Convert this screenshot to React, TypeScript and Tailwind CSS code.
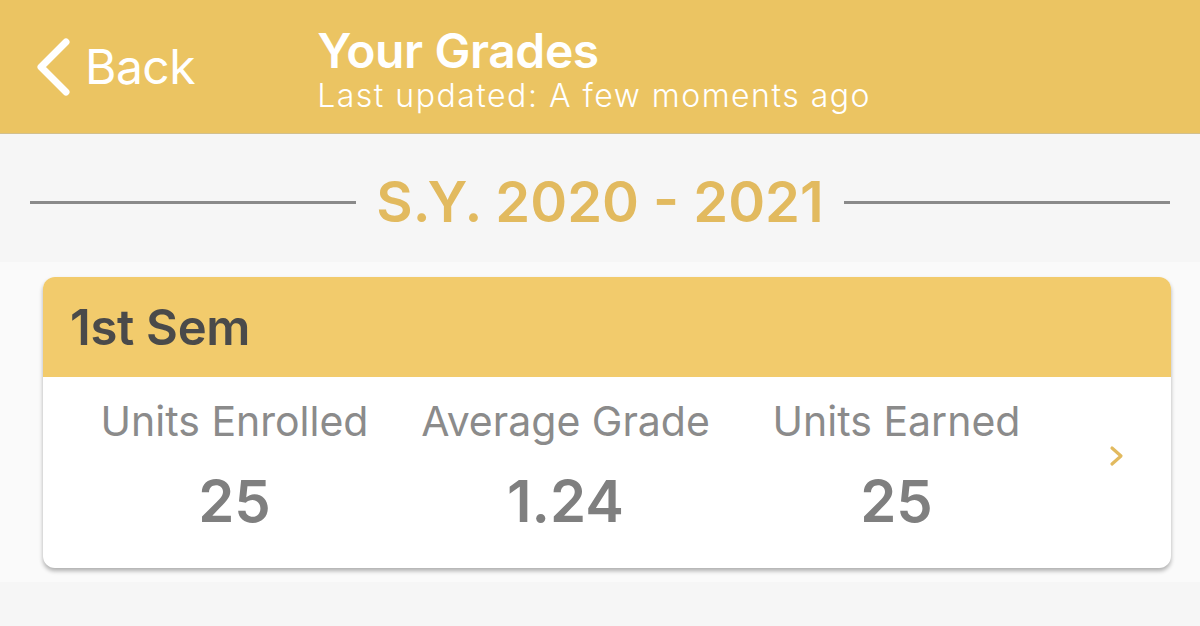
import React from 'react';

type Stat = { label: string; value: string };

const stats: Stat[] = [
    { label: 'Units Enrolled', value: '25' },
    { label: 'Average Grade', value: '1.24' },
    { label: 'Units Earned', value: '25' },
];

const BackChevron = () => (
    <svg width="36" height="58" viewBox="0 0 36 58" fill="none">
        <path d="M31 4L6 29l25 25" stroke="white" strokeWidth="7" strokeLinecap="round" strokeLinejoin="round" />
    </svg>
);

const App: React.FC = () => {
    return (
        <div className="flex h-[626px] w-[1200px] flex-col overflow-hidden bg-[#f6f6f6] font-['Inter',sans-serif]">
            {/* nav bar */}
            <header className="flex h-[134px] shrink-0 items-center border-b border-[#d2c08e] bg-[#ebc462]">
                <button className="ml-[35px] flex items-center gap-[14px] text-white">
                    <BackChevron />
                    <span className="text-[48px] leading-none tracking-[-0.5px]">Back</span>
                </button>
                <div className="ml-[122px] flex flex-col pt-[6px] text-white">
                    <h1 className="text-[48px] font-semibold leading-[52px] tracking-[-0.4px]">Your Grades</h1>
                    <p className="text-[32px] font-light leading-[38px] tracking-[1.5px]">Last updated: A few moments ago</p>
                </div>
            </header>

            {/* school year divider */}
            <div className="flex h-[128px] shrink-0 items-center gap-[20px] px-[30px] pt-[8px]">
                <div className="h-[3px] flex-1 bg-[#8a8a8a]" />
                <h2 className="text-[56px] font-semibold leading-none text-[#e2ba5f]">S.Y. 2020 - 2021</h2>
                <div className="h-[3px] flex-1 bg-[#8a8a8a]" />
            </div>

            {/* semester list */}
            <div className="bg-[#fafafa] pl-[43px] pr-[29px] pt-[15px] pb-[14px]">
                <div className="overflow-hidden rounded-[12px] bg-white shadow-[0_3px_4px_rgba(0,0,0,0.3)]">
                    <div className="flex h-[100px] items-center bg-[#f2cb6c] px-[27px]">
                        <h3 className="text-[49px] font-semibold leading-none tracking-[-0.3px] text-[#4a4a4a]">1st Sem</h3>
                    </div>
                    <div className="flex h-[191px] items-start pl-[26px]">
                        {stats.map((s) => (
                            <div key={s.label} className="flex w-[331px] flex-col items-center pt-[21px]">
                                <span className="text-[41px] leading-[46px] text-[#8b8b8b]">{s.label}</span>
                                <span className="mt-[28px] text-[58px] font-semibold leading-none text-[#7f7f7f]">{s.value}</span>
                            </div>
                        ))}
                        <div className="flex flex-1 justify-center pt-[68px]">
                            <svg width="16" height="22" viewBox="0 0 16 22" fill="none">
                                <path d="M3 3l9 8-9 8" stroke="#e2ba5f" strokeWidth="3.2" strokeLinecap="round" strokeLinejoin="round" />
                            </svg>
                        </div>
                    </div>
                </div>
            </div>
        </div>
    );
};

export default App;
